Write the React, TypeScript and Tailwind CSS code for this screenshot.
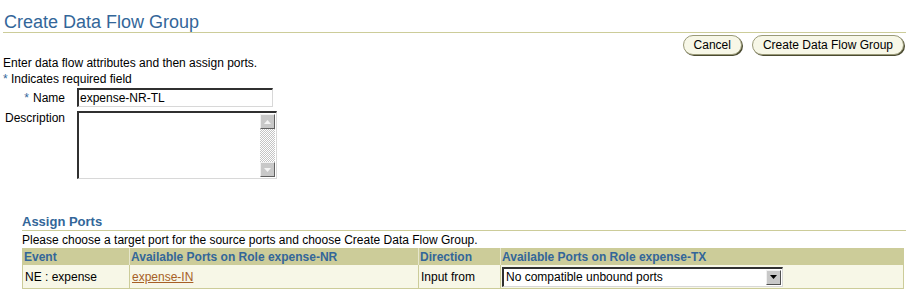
const font = { fontFamily: '"Liberation Sans", Arial, sans-serif' };

function Triangle({ dir, color }: { dir: "up" | "down"; color: string }) {
  return (
    <svg width="7" height="4" viewBox="0 0 7 4">
      {dir === "up" ? (
        <polygon points="3.5,0 7,4 0,4" fill={color} />
      ) : (
        <polygon points="0,0 7,0 3.5,4" fill={color} />
      )}
    </svg>
  );
}

function ScrollButton({ dir }: { dir: "up" | "down" }) {
  return (
    <div className="flex h-[15px] w-[15px] items-center justify-center border border-t-[#f0f0f0] border-l-[#f0f0f0] border-b-[#606060] border-r-[#606060] bg-[#c8c8c8]">
      <Triangle dir={dir} color="#f4f4f4" />
    </div>
  );
}

function PillButton({ label }: { label: string }) {
  return (
    <button
      type="button"
      className="h-[20px] rounded-full border border-[#9a9a78] bg-[#f7f7e7] px-[10px] text-[12px] leading-[16px] text-black shadow-[1px_1px_0_#4a4a30]"
    >
      {label}
    </button>
  );
}

export default function App() {
  return (
    <div className="h-[298px] w-[906px] overflow-hidden bg-white pl-[3px] text-[12px] text-black" style={font}>
      <h1 className="mt-[13px] border-b border-[#cccc99] pb-[1px] pl-[1px] text-[18px] leading-[18px] font-normal text-[#336699]">
        Create Data Flow Group
      </h1>

      <div className="mt-[2px] flex justify-end gap-[10px] pr-[2px]">
        <PillButton label="Cancel" />
        <PillButton label="Create Data Flow Group" />
      </div>

      <p className="leading-[16px]">Enter data flow attributes and then assign ports.</p>
      <p className="leading-[16px]">
        <span className="text-[#336699]">*</span> Indicates required field
      </p>

      <div className="mt-[1px] grid grid-cols-[62px_1fr] gap-x-[12px] gap-y-[4px]">
        <div className="flex items-center justify-end leading-[16px]">
          <span className="mr-[4px] text-[#336699]">*</span>Name
        </div>
        <div className="flex h-[19px] w-[196px] items-center border-t-2 border-l-2 border-t-[#303030] border-l-[#303030] border-b border-r border-b-[#d8d8d8] border-r-[#d8d8d8] bg-white pl-[1px] leading-[15px]">
          expense-NR-TL
        </div>

        <div className="-mt-[1px] text-right leading-[16px]">Description</div>
        <div className="flex h-[68px] w-[200px] border-t-2 border-l-2 border-t-[#303030] border-l-[#303030] border-b border-r border-b-[#d8d8d8] border-r-[#d8d8d8] bg-white">
          <div className="flex-1" />
          <div className="mr-[1px] mt-[1px] mb-[1px] flex w-[15px] flex-col bg-[repeating-conic-gradient(#c4c4c4_0%_25%,#ffffff_0%_50%)] bg-[length:2px_2px]">
            <ScrollButton dir="up" />
            <div className="flex-1" />
            <ScrollButton dir="down" />
          </div>
        </div>
      </div>

      <div className="ml-[19px] mt-[35px]">
        <h2 className="border-b border-[#cccc99] text-[13px] leading-[16px] font-bold text-[#336699]">Assign Ports</h2>
        <p className="mt-[2px] leading-[14px]">
          Please choose a target port for the source ports and choose Create Data Flow Group.
        </p>

        <div className="mt-[1px] grid w-[882px] grid-cols-[107px_289px_82px_1fr] border-l border-[#cccc99]">
          {["Event", "Available Ports on Role expense-NR", "Direction", "Available Ports on Role expense-TX"].map((h, i) => (
            <div
              key={h}
              className={`flex h-[17px] items-center bg-[#cccc99] pl-[1px] font-bold leading-[14px] text-[#336699] ${
                i < 3 ? "border-r border-[#e6e6cc]" : "border-r border-[#cccc99]"
              }`}
            >
              {h}
            </div>
          ))}

          <div className="flex h-[24px] items-center border-r border-b border-[#cccc99] bg-[#f7f7e7] pl-[2px] pt-[1px]">NE : expense</div>
          <div className="flex h-[24px] items-center border-r border-b border-[#cccc99] bg-[#f7f7e7] pl-[2px] pt-[1px]">
            <a href="#" className="text-[#a65f26] underline">expense-IN</a>
          </div>
          <div className="flex h-[24px] items-center border-r border-b border-[#cccc99] bg-[#f7f7e7] pl-[2px] pt-[1px]">Input from</div>
          <div className="flex h-[24px] items-center border-r border-b border-[#cccc99] bg-[#f7f7e7] pl-[1px]">
            <div className="flex h-[20px] w-[281px] items-center border-t-2 border-l-2 border-t-[#303030] border-l-[#303030] border-b border-r border-b-[#d8d8d8] border-r-[#d8d8d8] bg-white">
              <span className="flex-1 pl-[2px] leading-[15px]">No compatible unbound ports</span>
              <div className="mr-[1px] flex h-[15px] w-[15px] items-center justify-center border border-t-[#f0f0f0] border-l-[#f0f0f0] border-b-[#505050] border-r-[#505050] bg-[#c8c8c8]">
                <Triangle dir="down" color="#000000" />
              </div>
            </div>
          </div>
        </div>
      </div>
    </div>
  );
}
